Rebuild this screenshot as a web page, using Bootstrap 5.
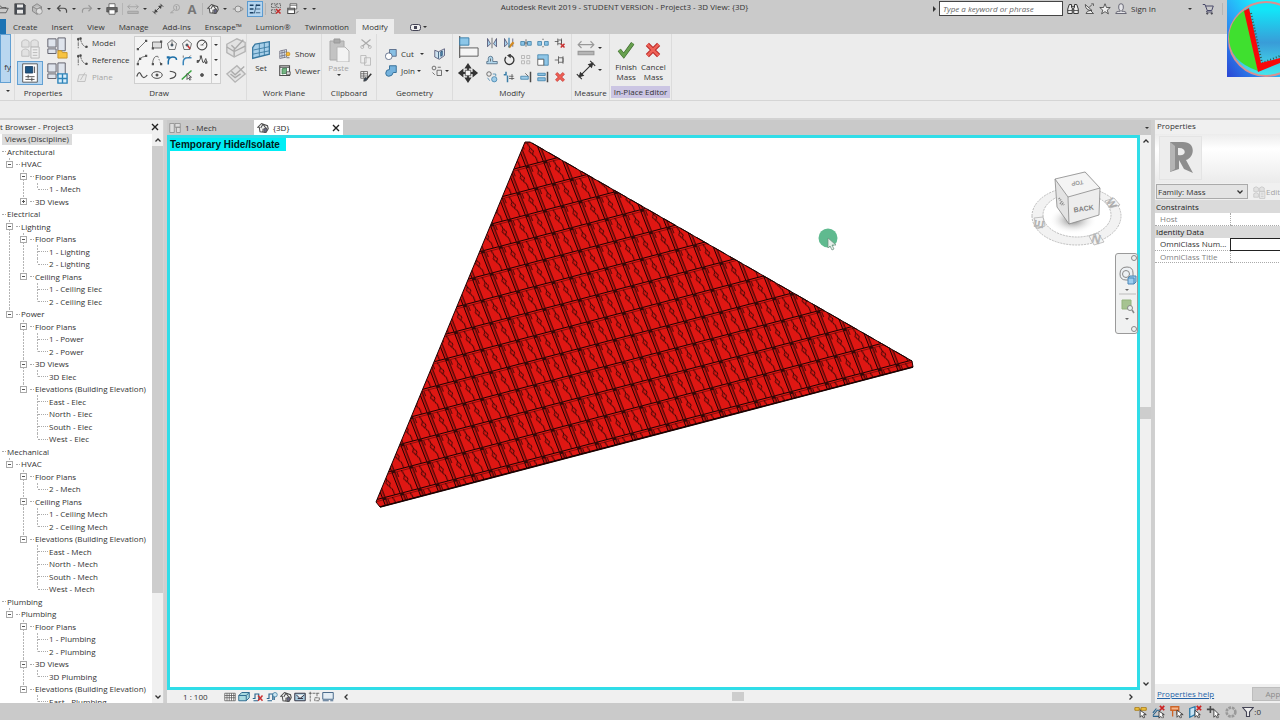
<!DOCTYPE html>
<html lang="en">
<head>
    <meta charset="UTF-8">
    <meta name="viewport" content="width=device-width, initial-scale=1">
    <title>Autodesk Revit 2019 - Project3</title>
    <link href="https://cdn.jsdelivr.net/npm/bootstrap@5.3.0/dist/css/bootstrap.min.css" rel="stylesheet">
    <style>
        body {
            font-family: "Open Sans", "Noto Sans", sans-serif;
            font-size: 8px;
            line-height: 12px;
            color: #333;
            background-color: #ececec;
        }

        button, input, select {
            font: inherit;
            color: inherit;
        }

        button {
            border: 0;
            background: none;
            padding: 0;
        }

        svg {
            display: block;
            flex: none;
        }

        use {
            fill: none;
            stroke: #4b4b4b;
        }

        .ic { width: 14px; height: 14px; }
        .ic-xs { width: 12px; height: 12px; }
        .ic-lg { width: 24px; height: 24px; }
        .caret { width: 8px; flex: none; }

        .caret::after, .arrow-mark {
            content: "";
            display: block;
            width: 4px;
            margin: auto;
            border: 2px solid transparent;
            border-top-color: #333;
            border-bottom: 0;
        }

        /* title bar */
        .titlebar, .tabbar, .statusbar { background-color: #cacaca; }
        .titlebar { height: 19px; }
        .quick { margin-left: -5px; gap: 1px; height: 17px; }
        .quick .tool { width: 16px; }
        .quick .tool svg { margin: auto; }
        .quick .active { background: #b5d5ef; box-shadow: inset 0 0 0 1px #5c9bd0; height: 16px; }
        .text-tool { font-size: 13px; font-weight: 700; color: #777; }
        .vsep { width: 1px; height: 12px; background: #b5b5b5; margin: 0 1px; }
        .app-title { line-height: 14px; }
        .account { width: 349px; height: 17px; }
        .search-box { width: 124px; height: 15px; border: 1px solid #444; background: #fff; padding: 0 3px; font-style: italic; }
        .search-box::placeholder { color: #666; opacity: 1; }
        .account-caret { margin: 0 8px 0 30px; }
        .logo-tile { top: 0; right: 0; z-index: 5; }

        /* ribbon */
        .tabbar { height: 15px; }
        .tabbar .file-tab { width: 6px; background: #1c73b4; }
        .tabbar .tab { padding: 0 7px; line-height: 15px; }
        .tabbar .tab.active { background: #ececec; padding: 0 6px; }
        .ribbon { height: 67px; border-bottom: 1px solid #d5d5d5; }
        .panel { border-right: 1px solid #dcdcdc; flex: none; }
        .panel-body { height: 52px; }
        .panel-name { text-align: center; line-height: 13px; }
        .selected { background: #b9d7f0; box-shadow: inset 0 0 0 1px #62a0d3; }
        .stack { display: flex; flex-direction: column; gap: 5px; }
        .w-select { width: 15px; }
        .w-props { width: 57px; }
        .w-draw { width: 175px; }
        .w-plane { width: 75px; }
        .w-clip { width: 55px; }
        .w-geom { width: 76px; }
        .w-mod { width: 119px; }
        .w-meas { width: 38px; }
        .w-place { width: 62px; }
        .dim { color: #a5a5a5; }
        .modify-btn { width: 11px; height: 49px; }
        .prop-grid { display: grid; grid-template-columns: repeat(2, 26px); grid-auto-rows: 24px; place-content: center; gap: 1px; }
        .prop-grid button { display: flex; align-items: center; justify-content: center; }
        .draw-list { width: 54px; }
        .gallery { width: 87px; height: 48px; border: 1px solid #cfcfcf; background: #f4f4f4; }
        .gallery-grid { display: grid; grid-template-columns: repeat(5, 15px); place-items: center; flex: 1; }
        .gallery-scroll { width: 9px; border-left: 1px solid #cfcfcf; }
        .mod-grid { display: grid; grid-template-columns: repeat(5, 17px); grid-template-rows: repeat(3, 17px); place-items: center; }
        .two-line { line-height: 10px; }
        .place-name { background: #cbc5e3; margin: 0 1px 1px; line-height: 12px; }
        .optionbar { height: 19px; border-bottom: 2px solid #d2d2d2; }

        /* project browser */
        .browser { width: 164px; background: #fff; border-right: 1px solid #d5d5d5; }
        .dock-head { height: 14px; background: #f0f0f0; flex: none; }
        .tree { margin-top: -1px; padding-left: 2px; min-height: 0; }
        .tree-row { height: 12px; display: flex; align-items: center; flex: none; white-space: nowrap; }
        .tree-row:nth-child(even) { height: 13px; }
        .guide { width: 14px; align-self: stretch; flex: none; display: flex; align-items: center; justify-content: center; }
        .line-full, .line-half { background: repeating-linear-gradient(#b5b5b5 0 2px, transparent 2px 3px) 7px 0 / 1px 100% no-repeat; }
        .line-half { background-size: 1px 50%; }
        .stub { width: 4px; border-top: 1px dotted #aaa; margin-right: 1px; flex: none; }
        .stub-leaf { width: 10px; margin-left: -6px; }
        .node-box { width: 7px; height: 7px; border: 1px solid #aaa; background: #fff; display: flex; align-items: center; justify-content: center; position: relative; }
        .node-box::before { content: ""; width: 3px; height: 1px; background: #555; }
        .node-plus::after { content: ""; position: absolute; width: 1px; height: 3px; background: #555; }
        .tree-root { background: #dcdcdc; padding: 0 3px; }
        .scroll-v { width: 11px; background: #f0f0f0; flex: none; }
        .scroll-v .end { height: 12px; display: flex; align-items: center; justify-content: center; }
        .thumb { background: #cdcdcd; }
        .browser .thumb { flex: 446; }
        .browser .track { flex: 98; }

        /* drawing area */
        .gutter { width: 3px; background: #cfcfcf; }
        .viewtabs { height: 15px; background: #c9c9c9; }
        .viewtab { width: 87px; gap: 4px; padding: 0 2px; }
        .viewtab.active { background: #fff; width: 89px; color: #222; padding: 0 3px; }
        .viewport { border: 3px solid #30dde8; background: #fff; min-height: 0; }
        .mode-flag { background: #00eef5; color: #001b20; font: bold 10px/13px "Liberation Sans", sans-serif; height: 13px; width: 116px; top: 0; left: 0; white-space: nowrap; z-index: 2; }
        .cube { top: 29px; right: 13px; }
        .navbar-3d { top: 115px; right: -1px; width: 23px; height: 81px; border: 1px solid #9a9a9a; border-radius: 3px; background: rgba(236, 238, 238, .8); }
        .viewbar { height: 13px; background: #f0f0f0; }
        .gap-tools { gap: 2px; }
        .h-thumb { width: 12px; height: 9px; }

        /* properties */
        .props { width: 126px; border-left: 1px solid #d0d0d0; background: #fff; }
        .props .dock-head { padding-left: 2px; }
        .type-box { height: 49px; background: linear-gradient(#ececec, #fff 30%, #ebebeb); padding: 2px 4px; }
        .type-img { width: 43px; height: 44px; background: #ededed; border: 1px solid #e4e4e4; }
        .type-row { height: 17px; background: #f0f0f0; padding-left: 1px; }
        .type-select { width: 92px; height: 15px; border: 1px solid #aaa; background: #e3e3e3; appearance: none; padding: 0 1px; }
        .grid-table { width: 160px; table-layout: fixed; border-collapse: collapse; }
        .grid-table th, .grid-table td { height: 12px; padding: 0 0 0 5px; line-height: 11px; font-weight: 400; border-bottom: 1px dotted #aaa; white-space: nowrap; overflow: hidden; }
        .grid-table .name-col { width: 75px; }
        .grid-table .dim { color: #828282; }
        .grid-table .group th { background: #dadada; padding-left: 1px; border-bottom: 0; color: #222; height: 13px; }
        .grid-table td { border-left: 1px dotted #aaa; padding: 0; }
        .grid-table input { display: block; width: 100%; height: 11px; border: 0; padding: 0; background: #fff; }
        .grid-table .current { border: 1px solid #222; }
        .props-foot { height: 19px; background: #f0f0f0; }
        .props-foot a { color: #2664a8; width: 97px; padding-left: 2px; }
        .apply { width: 48px; height: 14px; background: #cdcdcd; border: 1px solid #bdbdbd; color: #8b8b8b; flex: none; }
        .statusbar { height: 17px; }
        .status-tools { gap: 4px; padding-right: 19px; }
    </style>
</head>
<body class="vh-100 d-flex flex-column overflow-hidden position-relative">

    <!-- icon sprite -->
    <svg width="0" height="0" class="position-absolute">
        <symbol id="open" viewBox="0 0 16 16"><path d="M1 13V4h4l1 2h6v2M1 13l3-6h11l-3 6z"/></symbol>
        <symbol id="save" viewBox="0 0 16 16"><path d="M1 1h12l2 2v12H1z" fill="#454a52"/><path d="M4 2h8v4H4zM4 9h8v5H4z" fill="#e8e8e8" stroke="none"/></symbol>
        <symbol id="sync" viewBox="0 0 16 16"><path d="M2 5l6-4 6 4v6l-6 4-6-4zM2 5l6 3 6-3M8 8v7" stroke="#777" fill="#bbb"/><circle cx="11" cy="11" r="4" fill="#ddd" stroke="#888"/></symbol>
        <symbol id="undo" viewBox="0 0 16 16"><path d="M6 3L2 7l4 4M2 7h8q5 0 4 6" stroke-width="1.6"/></symbol>
        <symbol id="redo" viewBox="0 0 16 16"><path d="M10 3l4 4-4 4M14 7H6q-5 0-4 6" stroke="#999" stroke-width="1.6"/></symbol>
        <symbol id="print" viewBox="0 0 16 16"><path d="M4 6V1h8v5" fill="#fff"/><path d="M1 6h14v6H1z" fill="#666"/><path d="M4 9h8v6H4z" fill="#fff"/></symbol>
        <symbol id="meas" viewBox="0 0 16 16"><path d="M1 5h14M4 2L1 5l3 3M12 2l3 3-3 3" stroke="#999"/><path d="M1 11h14v3H1z" fill="#b5b5b5" stroke="#999"/></symbol>
        <symbol id="dim" viewBox="0 0 16 16"><path d="M3 13L13 3M1 11l4 4M11 1l4 4" stroke-width="1.3"/><path d="M3 13l1-5 4 4zM13 3l-1 5-4-4z" fill="#444" stroke="none"/></symbol>
        <symbol id="tag" viewBox="0 0 16 16"><circle cx="10" cy="6" r="4" stroke="#999"/><path d="M9 5l1-1v5M7 9l-5 4h4" stroke="#999"/></symbol>
        <symbol id="house" viewBox="0 0 16 16"><path d="M1 7l5-5 8 3 1 4-3 5-8-1-1-6zM5 8l3-5 5 7M8 9v5" fill="#f3f3f3" stroke-width="1.4"/><path d="M9 9l4-1v4l-3 2z" fill="#668"/></symbol>
        <symbol id="section" viewBox="0 0 16 16"><path d="M1 8h4M12 5l3 3-3 3" stroke="#777"/><circle cx="8" cy="8" r="4" stroke="#777" fill="#ddd"/></symbol>
        <symbol id="thin" viewBox="0 0 16 16"><path d="M1 3h5M1 8h5M1 13h5M9 3h6" stroke="#1c4164" stroke-width="2"/><path d="M9 8h6M9 13h6" stroke="#1c4164"/><path d="M7 14L10 2" stroke="#1c4164"/></symbol>
        <symbol id="closeh" viewBox="0 0 16 16"><path d="M2 1h5v5H2zM9 1h5v5H9zM2 9h5v5H2z" stroke-dasharray="2 1"/><path d="M8 8l6 6m0-6l-6 6" stroke="#c12c2c" stroke-width="2"/></symbol>
        <symbol id="switch" viewBox="0 0 16 16"><path d="M4 1h9v7H4zM4 3h9" fill="#fff"/><path d="M1 7h9v7H1zM1 9h9" fill="#fff" stroke-width="1.4"/><path d="M12 14l3-3"/></symbol>
        <symbol id="binoc" viewBox="0 0 16 16"><path d="M3 2h3v4l1 1v7H1V8zM10 2h3l2 6v6H9V7l1-1zM6 5h4M7 8h2" fill="#eee" stroke="#333" stroke-width="1.3"/><path d="M1 10h6M9 10h6" stroke="#333"/></symbol>
        <symbol id="dish" viewBox="0 0 16 16"><path d="M3 2q0 8 9 8zM8 6l4-4M4 14h10l-4-4-4 1z" fill="#eee" stroke="#333"/><path d="M11 1h3v3"/></symbol>
        <symbol id="star" viewBox="0 0 16 16"><path d="M8 1l2 5h5l-4 3.500 1.500 5L8 11.500 3.500 14.500 5 9.500 1 6h5z" fill="#eee" stroke="#333"/></symbol>
        <symbol id="person" viewBox="0 0 16 16"><path d="M5 4q0-3 3-3t3 3v3q0 2-2 3v1q6 0 6 3H1q0-3 6-3v-1Q5 9 5 7z" fill="#e5e5e8" stroke="#445"/></symbol>
        <symbol id="cart" viewBox="0 0 16 16"><path d="M1 2h3l3 8h6l2-6H5M7 10l-1 2h8" stroke="#446" stroke-width="1.3"/><circle cx="7" cy="14" r="1" fill="#446"/><circle cx="13" cy="14" r="1" fill="#446"/></symbol>
        <symbol id="tile4" viewBox="0 0 24 24"><path d="M3 5q4-4 8 0v6H3zM13 5q4-4 8 0v6h-8zM3 15q4-4 8 0v6H3z" fill="#e2e2e2" stroke="#bbb"/><path d="M13 11h9v12h-9zM15 14h5M15 17h5M15 20h5" fill="#eee" stroke="#b5b5b5"/></symbol>
        <symbol id="propsheet" viewBox="0 0 24 24"><path d="M4 2h16v20H4z" fill="#fff" stroke="#555"/><path d="M7 5h8v7H7z" fill="#1c5583" stroke="#1c4164"/><path d="M17 5v7M7 16h10M7 19h10M10 14v4M14 17v4"/></symbol>
        <symbol id="famtype" viewBox="0 0 24 24"><path d="M2 2h9v9H2zM13 1h8v14h-8zM2 13h9v5H2z" fill="#dfe4ec" stroke="#5b5b66"/><path d="M13 15h4l1 2h5v6H13z" fill="#f7c342" stroke="#c69224"/></symbol>
        <symbol id="famcat" viewBox="0 0 24 24"><path d="M2 2h9v9H2zM13 1h8v14h-8zM2 13h9v5H2z" fill="#dfe4ec" stroke="#5b5b66"/><path d="M13 13h10v10H13zM18 13v10M13 18h10" fill="#d9eefb" stroke="#2d83b8" stroke-width="1.500"/></symbol>
        <symbol id="model" viewBox="0 0 16 16"><path d="M3 1v14M6 2q1 9 8 12" stroke-dasharray="5 1"/><path d="M2 2h2v2H2zM13 12h2v2h-2zM5 1h2v2H5z" fill="#444"/></symbol>
        <symbol id="plane" viewBox="0 0 16 16"><path d="M2 14l2-9h10l-2 9zM6 12l6-10" stroke="#b5b5b5" fill="#e8e8e8"/></symbol>
        <symbol id="g1" viewBox="0 0 16 16"><path d="M3 13L13 3" /><path d="M1 12h3v3H1zM12 1h3v3h-3z" fill="#555" stroke="none"/></symbol>
        <symbol id="g2" viewBox="0 0 16 16"><path d="M2 4h12v8H2z" fill="#ddd"/><path d="M1 11h3v3H1zM12 2h3v3h-3z" fill="#555" stroke="none"/></symbol>
        <symbol id="g3" viewBox="0 0 16 16"><path d="M8 1l6 5-2 8H4L2 6zM8 8V3"/><circle cx="8" cy="8" r="1.500" fill="#368"/></symbol>
        <symbol id="g4" viewBox="0 0 16 16"><path d="M8 1l6 5-2 8H4L2 6z"/><circle cx="8" cy="8" r="1.500" fill="#368"/><path d="M9 9l3 4" stroke="#c33" stroke-width="2"/></symbol>
        <symbol id="g5" viewBox="0 0 16 16"><circle cx="8" cy="8" r="6.500" stroke-width="1.500"/><path d="M8 8l4-4M6 8h4"/></symbol>
        <symbol id="g6" viewBox="0 0 16 16"><path d="M2 14Q3 4 13 3"/><path d="M1 12h3v3H1zM12 1h3v3h-3zM4 5h3v3H4z" fill="#555" stroke="none"/></symbol>
        <symbol id="g7" viewBox="0 0 16 16"><path d="M2 13Q3 2 9 3"/><path d="M9 3l4 10" stroke-dasharray="2 2"/><path d="M12 12h3v3h-3zM1 12h3v3H1z" fill="#555" stroke="none"/></symbol>
        <symbol id="g8" viewBox="0 0 16 16"><path d="M3 14Q2 4 9 4q5 0 5 4" stroke="#1d6fa8" stroke-width="2"/><path d="M1 3h4v3H1z" fill="#1d6fa8" stroke="none"/></symbol>
        <symbol id="g9" viewBox="0 0 16 16"><path d="M3 15v-4q0-6 6-6h5" stroke="#3b86bb" stroke-width="2"/><path d="M3 2v3M13 2l-3 3"/></symbol>
        <symbol id="g10" viewBox="0 0 16 16"><path d="M1 11q2 2 4-3l2-5 2 8q2 2 3-3l1-2q1 4 2 5" stroke-width="1.300"/><path d="M5 2h3v3H5zM12 10h3v3h-3zM1 8h3v3H1z" fill="#555" stroke="none"/></symbol>
        <symbol id="g11" viewBox="0 0 16 16"><path d="M1 10q3-9 6-2t8 0" stroke-width="1.600"/></symbol>
        <symbol id="g12" viewBox="0 0 16 16"><ellipse cx="8" cy="8" rx="7" ry="4.500" stroke-width="1.300"/><circle cx="8" cy="8" r="1.500" fill="#444"/></symbol>
        <symbol id="g13" viewBox="0 0 16 16"><path d="M5 3q9 1 8 5t-8 5" stroke-width="1.500"/></symbol>
        <symbol id="g14" viewBox="0 0 16 16"><path d="M1 14L14 2" stroke="#37a13c" stroke-width="2"/><path d="M8 6v8l2-2 2 3 1-1-2-3h3z" fill="#eee" stroke="#333"/></symbol>
        <symbol id="g15" viewBox="0 0 16 16"><circle cx="8" cy="8" r="2" fill="#555"/></symbol>
        <symbol id="face" viewBox="0 0 24 24"><path d="M2 9l11-6 9 4v10l-12 6-8-5z" fill="#e2e2e2" stroke="#b4b4b4" stroke-width="1.500"/><path d="M7 10l4 4 9-10M10 14v8M2 12l8 5 12-6" stroke="#aaa" stroke-width="1.500"/></symbol>
        <symbol id="faceline" viewBox="0 0 24 24"><path d="M2 13L13 4l9 9-11 9z" fill="#e4e4e4" stroke="#b4b4b4" stroke-width="1.500"/><path d="M7 10l4 4 10-9M6 13l5 4 6-4" stroke="#aaa" stroke-width="1.500"/></symbol>
        <symbol id="setplane" viewBox="0 0 24 24"><path d="M5 5l17-3v15L2 22V9z" fill="#a7cfe9" stroke="#36779f" stroke-width="1.500"/><path d="M10 4v16M16 3v16M3 12l19-4M2 17l20-4" stroke="#36779f"/></symbol>
        <symbol id="showp" viewBox="0 0 16 16"><path d="M1 4l9-2v10l-9 2zM4 3v10M7 3v10M1 7l9-2M1 11l9-2" fill="#e5eef4" stroke="#667"/><circle cx="12" cy="8" r="2.500" fill="#f7bd35" stroke="#c78b1d"/><path d="M10 13h4"/></symbol>
        <symbol id="viewer" viewBox="0 0 16 16"><path d="M1 1h13v13H1zM1 3h13" fill="#fff" stroke-width="1.500"/><path d="M4 5l6-1v7l-6 1z" fill="#74b583" stroke="#377a49"/><path d="M10 9h5v4h-5z" fill="#ddd"/></symbol>
        <symbol id="paste" viewBox="0 0 24 24"><path d="M3 3h14v19H3z" fill="#c3c3c3" stroke="#aaa"/><path d="M7 1h6v4H7z" fill="#aaa" stroke="#999"/><path d="M10 9h8l4 4v11H10z" fill="#f3f3f3" stroke="#b5b5b5"/></symbol>
        <symbol id="scissors" viewBox="0 0 16 16"><path d="M2 2l11 9M14 2L3 11" stroke="#aaa" stroke-width="1.500"/><circle cx="3" cy="12" r="2" stroke="#aaa"/><circle cx="13" cy="12" r="2" stroke="#aaa"/></symbol>
        <symbol id="copy" viewBox="0 0 16 16"><path d="M1 2h7v10H1zM6 5h8v10H6z" fill="#eee" stroke="#b0b0b0"/></symbol>
        <symbol id="match" viewBox="0 0 16 16"><path d="M1 2h9v9H1zM1 5h9M1 8h9M5 2v9" fill="#eee" stroke="#555"/><path d="M15 5l-6 7" stroke="#333" stroke-width="2"/><path d="M8 10q-3 0-3 5 4 0 5-3z" fill="#345"/></symbol>
        <symbol id="cutg" viewBox="0 0 16 16"><path d="M6 2h9v9H6z" fill="#87bfe4" stroke="#457"/><circle cx="5" cy="11" r="4.500" fill="#fff" stroke="#457"/></symbol>
        <symbol id="joing" viewBox="0 0 16 16"><path d="M6 1h9v9h-4q-1 5-6 5-4 0-4-4 0-5 5-5z" fill="#74b2dd" stroke="#357099" stroke-width="1.300"/></symbol>
        <symbol id="wallj" viewBox="0 0 16 16"><path d="M1 3l5 2 8-4v9l-7 5-6-3z" fill="#cfe3f0" stroke="#446"/><path d="M6 5v9M9 5l2-1v6l-2 1z" stroke="#246" fill="#5b9ac8"/></symbol>
        <symbol id="demol" viewBox="0 0 16 16"><circle cx="4" cy="4" r="2.500"/><path d="M8 7h6v7H8zM2 10l3 3M9 3h4"/></symbol>
        <symbol id="align" viewBox="0 0 24 24"><path d="M3 0v24" stroke="#333"/><path d="M3 2h10v8H3z" fill="#8cc6e8" stroke="#377da8"/><path d="M3 13h20v9H3z" fill="#f5f5f5" stroke="#555"/></symbol>
        <symbol id="move" viewBox="0 0 24 24"><path d="M12 1l4 6h-3v4h4V7l6 5-6 5v-4h-4v4h3l-4 6-4-6h3v-4H7v4l-6-5 6-5v4h4V7H8z" fill="#333" stroke="none"/><path d="M9 9h6v6H9z" fill="#f4f4f4" stroke="#555"/></symbol>
        <symbol id="m1" viewBox="0 0 16 16"><path d="M2 2v11l4-4zM14 2v11l-4-4z" fill="#a8d1ea" stroke="#446"/><path d="M8 1v14"/></symbol>
        <symbol id="m2" viewBox="0 0 16 16"><path d="M2 2v11l4-4zM13 2v11" fill="#a8d1ea" stroke="#446"/><path d="M8 14l6-7" stroke="#d28a22" stroke-width="3"/><path d="M8 1v13" stroke="#2678ad" stroke-width="1.500"/></symbol>
        <symbol id="m3" viewBox="0 0 16 16"><path d="M1 6h5v5H1zM10 6h5v5h-5z" fill="#8ac3e6" stroke="#387ba4"/><path d="M8 3v10M6 8h4"/></symbol>
        <symbol id="m4" viewBox="0 0 16 16"><path d="M1 6h5v5H1zM10 6h5v5h-5z" fill="#8ac3e6" stroke="#387ba4"/><path d="M7 3h2M7 13h2"/></symbol>
        <symbol id="m5" viewBox="0 0 16 16"><path d="M1 6h5M5 2v9M5 4h5v5H5M10 2v9"/><path d="M9 9l5 5m0-5l-5 5" stroke="#c93030" stroke-width="2"/></symbol>
        <symbol id="m6" viewBox="0 0 16 16"><path d="M1 13h14v-3H9V6q0-3-3-3T3 6v4H1z" fill="#b3d8ed" stroke="#46627a"/><path d="M6 10V6"/></symbol>
        <symbol id="m7" viewBox="0 0 16 16"><path d="M4 4a6 6 0 1 0 5-2" stroke="#333" stroke-width="1.700"/><path d="M10 0v5L6 2z" fill="#333"/></symbol>
        <symbol id="m8" viewBox="0 0 16 16"><path d="M2 2h4v4H2zM9 2h4v4H9zM2 9h4v4H2zM9 9h4v4H9z" stroke="#aaa"/></symbol>
        <symbol id="m9" viewBox="0 0 16 16"><path d="M1 1h14v14H9V7H1z" fill="#8fc6e7" stroke="#397da8"/><path d="M1 7h8v8H1z" fill="#fff"/></symbol>
        <symbol id="m10" viewBox="0 0 16 16"><path d="M1 8h5M6 3v10M6 5h6v6H6M12 3v10"/></symbol>
        <symbol id="m11" viewBox="0 0 16 16"><circle cx="4" cy="4" r="3"/><path d="M9 4h4v3M2 9l3 4" stroke="#397da8"/><circle cx="11" cy="11" r="3.500" fill="#9fcce8" stroke="#397da8"/></symbol>
        <symbol id="m12" viewBox="0 0 16 16"><path d="M4 1v4H1M6 6v9" stroke="#397da8" stroke-width="2"/><path d="M8 7h6M12 4v8M8 10h7"/></symbol>
        <symbol id="m13" viewBox="0 0 16 16"><path d="M14 1v14" stroke-width="2"/><path d="M1 7h10v4H1z" fill="#9fcce8" stroke="#397da8"/><path d="M7 3l4 4"/></symbol>
        <symbol id="m14" viewBox="0 0 16 16"><path d="M14 1v14" stroke-width="2"/><path d="M1 3h10v3H1zM1 9h10v4H1z" fill="#8bc1e2" stroke="#397da8"/></symbol>
        <symbol id="redx" viewBox="0 0 16 16"><path d="M3 3l10 10M13 3L3 13" stroke="#b92525" stroke-width="4"/><path d="M3 3l10 10M13 3L3 13" stroke="#ee6257" stroke-width="2.500"/></symbol>
        <symbol id="check" viewBox="0 0 16 16"><path d="M2 8l4 5 8-11" stroke="#37642a" stroke-width="3.500"/><path d="M2 8l4 5 8-11" stroke="#68a04f" stroke-width="2.500"/></symbol>
        <symbol id="bigdim" viewBox="0 0 24 24"><path d="M4 20L20 4M1 17l6 6M17 1l6 6" stroke="#333" stroke-width="1.400"/><path d="M3 21l2-7 5 5zM21 3l-2 7-5-5z" fill="#333" stroke="none"/></symbol>
        <symbol id="up" viewBox="0 0 8 8"><path d="M1.500 5.500L4 3l2.500 2.500" stroke="#333" stroke-width="1.300"/></symbol>
        <symbol id="down" viewBox="0 0 8 8"><path d="M1.500 2.500L4 5l2.500-2.500" stroke="#333" stroke-width="1.300"/></symbol>
        <symbol id="left" viewBox="0 0 8 8"><path d="M5.500 1.500L3 4l2.500 2.500" stroke="#333" stroke-width="1.300"/></symbol>
        <symbol id="right" viewBox="0 0 8 8"><path d="M2.500 1.500L5 4 2.500 6.500" stroke="#333" stroke-width="1.300"/></symbol>
        <symbol id="cross" viewBox="0 0 8 8"><path d="M1 1l6 6M7 1L1 7" stroke="#222" stroke-width="1.400"/></symbol>
        <symbol id="planview" viewBox="0 0 16 16"><path d="M1 2h6v12H1zM8 2h7v5H8zM10 7v7h5V7z" stroke="#888" fill="#ddd"/></symbol>
        <symbol id="detail" viewBox="0 0 16 16"><path d="M1 3h14v10H1zM1 6h14M1 9h14M4 3v10M7 3v10M10 3v10M13 3v10" fill="#fff" stroke="#555"/></symbol>
        <symbol id="style3d" viewBox="0 0 16 16"><path d="M1 6l4-4h10v7l-4 4H1zM1 6h10v7M11 6l4-4" fill="#a9dbe0" stroke="#2d6c90" stroke-width="1.300"/></symbol>
        <symbol id="sunx" viewBox="0 0 16 16"><path d="M1 10h3V4h5v8M2 13h6" stroke="#27638d" stroke-width="1.500"/><path d="M8 6l6 7m0-7l-6 7" stroke="#c33" stroke-width="2"/></symbol>
        <symbol id="sunb" viewBox="0 0 16 16"><path d="M1 10h3V4h5v8M2 13h6M11 12V5" stroke="#27638d" stroke-width="1.500"/><circle cx="12" cy="5" r="3" fill="#cde7f2" stroke="#38789f"/></symbol>
        <symbol id="shade" viewBox="0 0 16 16"><path d="M1 3h14v10H1zM3 5l5 5 6-5M5 10h7" fill="#a8cbdf" stroke="#334" stroke-width="1.300"/></symbol>
        <symbol id="crop" viewBox="0 0 16 16"><path d="M1 3h14M3 1v13M12 3v5M9 9h6v4H9z" stroke-dasharray="4 1"/></symbol>
        <symbol id="screen" viewBox="0 0 16 16"><path d="M1 2h14v9H1zM1 13h8M11 13h4" fill="#e4edf4" stroke="#47688a" stroke-width="1.300"/></symbol>
        <symbol id="s1" viewBox="0 0 16 16"><path d="M1 3h5v3H1zM8 3h6v3H8zM6 5h2" fill="#f4c743" stroke="#a8790f"/><path d="M7 6v8l2-2 2 3 1-1-1-3h3z" fill="#fff" stroke="#333"/></symbol>
        <symbol id="s2" viewBox="0 0 16 16"><path d="M1 12l5-6h4M1 9l4-5M1 13h7" stroke="#27638d" stroke-width="1.300"/><path d="M9 1l5 5m0-5L9 6" stroke="#c22" stroke-width="2"/><path d="M8 7v8l2-2 2 2 1-1-1-3h2z" fill="#fff" stroke="#333"/></symbol>
        <symbol id="s3" viewBox="0 0 16 16"><path d="M1 2h9v4H1zM3 6v7M8 6v5" fill="#f6b68a" stroke="#cd6528" stroke-width="1.500"/><path d="M8 6v8l2-2 2 3 1-1-1-3h3z" fill="#fff" stroke="#333"/></symbol>
        <symbol id="s4" viewBox="0 0 16 16"><path d="M2 4l6-2v9l-6 3z" fill="#cae5f4" stroke="#2979aa" stroke-width="1.500"/><path d="M10 1l5 5m0-5l-5 5" stroke="#c22" stroke-width="2"/><path d="M8 6v8l2-2 2 3 1-1-1-3h2z" fill="#fff" stroke="#333"/></symbol>
        <symbol id="s5" viewBox="0 0 16 16"><path d="M5 1v8M1 5h8" stroke-width="1.800"/><path d="M9 5v9l2-2 2 3 1-1-1-3h2z" fill="#fff" stroke="#333"/></symbol>
        <symbol id="s6" viewBox="0 0 16 16"><circle cx="8" cy="8" r="5" stroke="#999" stroke-width="3" stroke-dasharray="3 1"/></symbol>
        <symbol id="s7" viewBox="0 0 16 16"><path d="M1 2h14l-5 6v6H6V8z" fill="#eee" stroke="#445" stroke-width="1.500"/></symbol>
    </svg>

    <!-- title bar -->
    <header class="titlebar d-flex flex-shrink-0">
        <div class="quick d-flex align-items-center" id="quick"></div>
        <div class="app-title flex-grow-1 text-center text-nowrap">Autodesk Revit 2019 - STUDENT VERSION - Project3 - 3D View: {3D}</div>
        <div class="account d-flex align-items-center flex-shrink-0">
            <svg width="8" height="8" viewBox="0 0 8 8"><path d="M2 1l3 3-3 3z" fill="#333"/></svg>
            <input class="search-box" type="text" placeholder="Type a keyword or phrase" aria-label="Search help">
            <button class="ps-1 pe-1" aria-label="Search"><svg class="ic-xs"><use href="#binoc"/></svg></button>
            <button aria-label="Communication center"><svg class="ic-xs"><use href="#dish"/></svg></button>
            <button class="ps-1 pe-1" aria-label="Favourites"><svg class="ic-xs"><use href="#star"/></svg></button>
            <button class="d-flex align-items-center gap-1"><svg class="ic-xs"><use href="#person"/></svg>Sign In</button>
            <button class="caret account-caret" aria-label="Account menu"></button>
            <button class="me-1" aria-label="App store"><svg class="ic-xs"><use href="#cart"/></svg></button>
            <span class="vsep ms-1"></span>
        </div>
    </header>

    <svg class="logo-tile position-absolute" width="53" height="77" viewBox="1227 0 53 77">
        <defs>
            <linearGradient id="sky" x1="1" y1="0" x2="0" y2="1"><stop offset=".2" stop-color="#19f3ff"/><stop offset=".6" stop-color="#2c9cf5"/><stop offset="1" stop-color="#2a45d4"/></linearGradient>
            <linearGradient id="glass" x1="0" y1="0" x2="0" y2="1"><stop offset=".1" stop-color="#12e6f8"/><stop offset=".55" stop-color="#399cd8"/><stop offset="1" stop-color="#45e8ee"/></linearGradient>
        </defs>
        <path d="M1227 0h53v77h-53z" fill="url(#sky)"/>
        <circle cx="1266" cy="39" r="37" fill="url(#glass)" stroke="#d99090" stroke-width="2"/>
        <path d="M1245 10l13 61Q1229 61 1229 37q1-17 16-27z" fill="#3fe02f"/>
        <path d="M1251 13l11 50 18-7" fill="none" stroke="#2b5b50" stroke-width="2" stroke-dasharray="1 2"/>
        <path d="M1244 11l5-3 12 55 19-5v5l-22 9z" fill="#f80808"/>
    </svg>

    <nav class="tabbar d-flex flex-shrink-0" id="tabs"></nav>

    <!-- ribbon -->
    <section class="ribbon d-flex flex-shrink-0">
        <div class="panel w-select">
            <div class="panel-body"><button class="selected modify-btn pt-3 text-end overflow-hidden" aria-label="Modify">fy</button></div>
            <div class="caret mx-1 pt-1"></div>
        </div>
        <div class="panel w-props">
            <div class="panel-body prop-grid">
                <button aria-label="Type properties"><svg width="22" height="22"><use href="#tile4"/></svg></button>
                <button aria-label="Family types"><svg width="22" height="22"><use href="#famtype"/></svg></button>
                <button class="selected" aria-label="Properties"><svg width="22" height="22"><use href="#propsheet"/></svg></button>
                <button aria-label="Family category"><svg width="22" height="22"><use href="#famcat"/></svg></button>
            </div>
            <div class="panel-name">Properties</div>
        </div>
        <div class="panel w-draw">
            <div class="panel-body d-flex align-items-center px-1 gap-1">
                <div class="draw-list stack">
                    <button class="d-flex align-items-center gap-1 text-nowrap"><svg class="ic-xs"><use href="#model"/></svg>Model</button>
                    <button class="d-flex align-items-center gap-1 text-nowrap"><svg class="ic-xs"><use href="#model"/></svg>Reference</button>
                    <button class="d-flex align-items-center gap-1 dim"><svg class="ic-xs"><use href="#plane"/></svg>Plane</button>
                </div>
                <div class="gallery d-flex flex-shrink-0">
                    <div class="gallery-grid" id="gallery"></div>
                    <div class="gallery-scroll d-flex flex-column justify-content-around">
                        <span class="arrow-mark"></span><span class="arrow-mark"></span><span class="arrow-mark"></span>
                    </div>
                </div>
                <div class="d-flex flex-column gap-1">
                    <button aria-label="Draw on face"><svg width="22" height="22"><use href="#face"/></svg></button>
                    <button aria-label="Draw on work plane"><svg width="22" height="22"><use href="#faceline"/></svg></button>
                </div>
            </div>
            <div class="panel-name">Draw</div>
        </div>
        <div class="panel w-plane">
            <div class="panel-body d-flex px-1 gap-2">
                <button class="d-flex flex-column align-items-center pt-1"><svg width="20" height="24"><use href="#setplane"/></svg>Set</button>
                <div class="stack justify-content-center pt-1">
                    <button class="d-flex align-items-center gap-1"><svg class="ic-xs"><use href="#showp"/></svg>Show</button>
                    <button class="d-flex align-items-center gap-1"><svg class="ic-xs"><use href="#viewer"/></svg>Viewer</button>
                </div>
            </div>
            <div class="panel-name">Work Plane</div>
        </div>
        <div class="panel w-clip">
            <div class="panel-body d-flex justify-content-around pt-1">
                <button class="dim d-flex flex-column align-items-center"><svg class="ic-lg"><use href="#paste"/></svg>Paste<span class="caret mb-auto"></span></button>
                <div class="d-flex flex-column justify-content-between pb-1">
                    <button aria-label="Cut to clipboard"><svg class="ic-xs"><use href="#scissors"/></svg></button>
                    <button aria-label="Copy to clipboard"><svg class="ic-xs"><use href="#copy"/></svg></button>
                    <button aria-label="Match type"><svg class="ic-xs"><use href="#match"/></svg></button>
                </div>
            </div>
            <div class="panel-name">Clipboard</div>
        </div>
        <div class="panel w-geom">
            <div class="panel-body stack justify-content-center px-2 pt-1">
                <div class="d-flex align-items-center">
                    <button class="d-flex align-items-center gap-1"><svg class="ic-xs"><use href="#cutg"/></svg>Cut</button><span class="caret mx-1"></span>
                    <button class="ms-1" aria-label="Wall joins"><svg class="ic-xs"><use href="#wallj"/></svg></button>
                </div>
                <div class="d-flex align-items-center">
                    <button class="d-flex align-items-center gap-1"><svg class="ic-xs"><use href="#joing"/></svg>Join</button><span class="caret me-1"></span>
                    <button class="ms-1" aria-label="Demolish"><svg class="ic-xs"><use href="#demol"/></svg></button><span class="caret"></span>
                </div>
            </div>
            <div class="panel-name">Geometry</div>
        </div>
        <div class="panel w-mod">
            <div class="panel-body d-flex align-items-center px-1 gap-1">
                <div class="d-flex flex-column gap-1">
                    <button aria-label="Align"><svg width="22" height="22"><use href="#align"/></svg></button>
                    <button aria-label="Move"><svg width="22" height="22"><use href="#move"/></svg></button>
                </div>
                <div class="mod-grid" id="modGrid"></div>
            </div>
            <div class="panel-name">Modify</div>
        </div>
        <div class="panel w-meas">
            <div class="panel-body d-flex flex-column justify-content-around py-1">
                <div class="d-flex align-items-center px-1"><button aria-label="Measure"><svg width="20" height="18"><use href="#meas"/></svg></button><span class="caret"></span></div>
                <div class="d-flex align-items-center px-1"><button aria-label="Aligned dimension"><svg width="20" height="22"><use href="#bigdim"/></svg></button><span class="caret"></span></div>
            </div>
            <div class="panel-name">Measure</div>
        </div>
        <div class="panel w-place">
            <div class="panel-body d-flex justify-content-center gap-1 pt-1">
                <button class="d-flex flex-column align-items-center two-line"><svg width="18" height="24"><use href="#check"/></svg><span>Finish<br>Mass</span></button>
                <button class="d-flex flex-column align-items-center two-line"><svg width="18" height="24"><use href="#redx"/></svg><span>Cancel<br>Mass</span></button>
            </div>
            <div class="panel-name place-name">In-Place Editor</div>
        </div>
    </section>
    <div class="optionbar flex-shrink-0"></div>

    <main class="flex-grow-1 d-flex overflow-hidden">
        <!-- project browser -->
        <aside class="browser d-flex flex-column flex-shrink-0">
            <div class="dock-head d-flex align-items-center justify-content-between">
                <span>t Browser - Project3</span>
                <button class="me-1" aria-label="Close browser"><svg width="8" height="8"><use href="#cross"/></svg></button>
            </div>
            <div class="d-flex flex-grow-1 overflow-hidden">
                <div class="tree flex-grow-1 d-flex flex-column overflow-hidden" id="tree"></div>
                <div class="scroll-v d-flex flex-column">
                    <span class="end"><svg width="8" height="8"><use href="#up"/></svg></span>
                    <span class="thumb"></span><span class="track"></span>
                    <span class="end"><svg width="8" height="8"><use href="#down"/></svg></span>
                </div>
            </div>
        </aside>
        <div class="gutter"></div>

        <!-- drawing area -->
        <section class="flex-grow-1 d-flex flex-column">
            <div class="viewtabs d-flex flex-shrink-0">
                <button class="viewtab d-flex align-items-center"><svg class="ic-xs"><use href="#planview"/></svg>1 - Mech</button>
                <button class="viewtab active d-flex align-items-center"><svg class="ic-xs"><use href="#house"/></svg>{3D}<svg class="ms-auto" width="8" height="8"><use href="#cross"/></svg></button>
                <button class="caret ms-auto" aria-label="View list"></button>
            </div>
            <div class="d-flex flex-grow-1 overflow-hidden">
                <div class="viewport position-relative flex-grow-1">
                    <div class="mode-flag position-absolute">Temporary Hide/Isolate</div>
                    <svg width="100%" height="100%" viewBox="170 138 967 549">
                        <defs>
                            <!-- one roof tile, skewed onto the slope of the roof -->
                            <pattern id="roofTile" width="18" height="24" patternUnits="userSpaceOnUse" patternTransform="matrix(.983 -.256 .363 .929 542.700 161)">
                                <rect width="18" height="24" fill="#df1713"/>
                                <path d="M0 .5h18M.5 0v24M3 0v24" fill="none" stroke="#1c0202"/>
                                <path d="M0 2.500h18" fill="none" stroke="#6d0a08" stroke-width=".7"/>
                                <path d="M5 3v5M10 2l1 6-2 3 2 4 2-3-2-4M11 15l2 4v5" fill="none" stroke="#240303" stroke-width=".9"/>
                                <path d="M0 0h4v3H0z" fill="#340807"/>
                            </pattern>
                        </defs>
                        <path d="M525 142h5L912 361l1 6-533 140-4-5z" fill="url(#roofTile)" stroke="#1c0202" stroke-linejoin="round"/>
                        <path d="M532 143L912 361" stroke="#1c0202" stroke-dasharray="14 5"/>
                        <path d="M380 507l533-140" stroke="#1c0202" stroke-width="1.500"/>
                        <circle cx="828" cy="238" r="9.500" fill="#5fba8f"/>
                        <path d="M828 238v10l2-2 2 4 2-1-2-4h4z" fill="#e4efe9" stroke="#6b8e7c" stroke-width=".7"/>
                    </svg>
                    <svg class="cube position-absolute" width="94" height="80" viewBox="1030 167 94 80" font-family="Liberation Sans, sans-serif">
                        <defs><radialGradient id="cubeShade"><stop offset="0" stop-color="#777"/><stop offset="1" stop-color="#fff" stop-opacity="0"/></radialGradient></defs>
                        <path fill-rule="evenodd" d="M1032 216a44.500 29 0 1 0 89 0a44.500 29 0 1 0-89 0zM1043 215a34 22 0 1 0 68 0a34 22 0 1 0-68 0z" fill="#f2f2f2" stroke="#bbb" stroke-dasharray="2 1"/>
                        <ellipse cx="1073" cy="220" rx="24" ry="14" fill="url(#cubeShade)"/>
                        <path d="M1055 179l31-8 14 17-32 9z" fill="#f4f4f4"/><path d="M1055 179l13 18 1 27-12-17z" fill="#e3e3e3"/><path d="M1068 197l32-9-1 27-30 9z" fill="#ededed"/>
                        <path d="M1055 179l30-7 15 16-32 9zM1055 179l2 28 12 17-1-27M1100 188l-1 27-30 9" fill="none" stroke="#888" stroke-width=".8"/>
                        <text x="1084" y="211" font-size="7" font-weight="bold" fill="#808080" text-anchor="middle" transform="rotate(-8 1084 211)">BACK</text>
                        <text x="1077" y="181" font-size="6" font-weight="bold" fill="#999" text-anchor="middle" transform="rotate(170 1077 181)">TOP</text>
                        <g font-size="12" fill="#f4f4f4" stroke="#aaa" stroke-width=".7" text-anchor="middle">
                            <path d="M1034 218l9-1 2 9-8 3zM1089 236l9-3 6 9-10 3zM1105 201l9-3 6 7-10 3z"/>
                            <text x="1096" y="243" transform="rotate(15 1096 240)">N</text>
                            <text x="1039" y="228" transform="rotate(-80 1039 224)">E</text>
                            <text x="1112" y="207" font-size="10" transform="rotate(60 1112 203)">W</text>
                        </g>
                        <path d="M1059 198l5 7M1060 203l3 2" stroke="#888" stroke-width="2" stroke-dasharray="1 1"/>
                    </svg>
                    <div class="navbar-3d position-absolute">
                        <svg width="21" height="79" viewBox="0 0 21 79" fill="none" stroke="#888">
                            <circle cx="18" cy="4" r="2.500"/><circle cx="18" cy="75" r="2.500"/>
                            <path d="M4 20q0-7 7-7 6 0 6 6v7h-7q-6 0-6-6z" fill="#edf1f4"/><circle cx="10" cy="20" r="3.500"/>
                            <path d="M12 24l2-2h6v6l-2 2h-6zM12 24h6v6" fill="#9dcdf0" stroke="#4b87b6"/>
                            <path d="M9 35h4l-2 2zM9 64h4l-2 2z" fill="#666" stroke="none"/><path d="M3 40h17" stroke="#bbb"/>
                            <path d="M6 46h9v9H6z" fill="#a6c391" stroke="#94b37d"/><circle cx="14" cy="54" r="2.500" fill="#e9f1ee"/><path d="M16 56l2 3" stroke-width="1.500"/>
                        </svg>
                    </div>
                </div>
                <div class="scroll-v d-flex flex-column">
                    <span class="end"><svg width="8" height="8"><use href="#up"/></svg></span>
                    <span class="flex-grow-1 d-flex align-items-center"><span class="thumb w-100 pt-2 pb-1"></span></span>
                    <span class="end"><svg width="8" height="8"><use href="#down"/></svg></span>
                </div>
            </div>
            <div class="viewbar d-flex align-items-center flex-shrink-0 ps-3">
                <span class="me-3">1 : 100</span>
                <div class="d-flex gap-tools" id="viewTools"></div>
                <svg class="ms-2" width="8" height="8"><use href="#left"/></svg>
                <div class="flex-grow-1 d-flex justify-content-center"><span class="thumb h-thumb"></span></div>
                <svg class="me-3" width="8" height="8"><use href="#right"/></svg>
            </div>
        </section>
        <div class="gutter"></div>

        <!-- properties palette -->
        <aside class="props d-flex flex-column flex-shrink-0 overflow-hidden">
            <div class="dock-head">Properties</div>
            <div class="type-box">
                <div class="type-img d-flex align-items-center justify-content-center">
                    <svg width="28" height="34" viewBox="0 0 28 34"><path fill-rule="evenodd" d="M3 1h13c13 0 12 15 3 18l7 13-9-4-5-9v9l-9 3zM11 7v7c9 2 9-8 0-7z" fill="#8e8e8e"/><path d="M3 1l5 4v23l-5 3z" fill="#b5b5b5"/></svg>
                </div>
            </div>
            <div class="type-row d-flex align-items-center flex-shrink-0">
                <div class="position-relative flex-shrink-0">
                    <select class="type-select" aria-label="Type"><option>Family: Mass</option></select>
                    <svg class="position-absolute top-50 end-0 translate-middle-y me-1" width="8" height="8"><use href="#down"/></svg>
                </div>
                <button class="dim d-flex align-items-center ms-1 text-nowrap"><svg class="ic"><use href="#tile4"/></svg>Edit Type</button>
            </div>
            <table class="grid-table">
                <colgroup><col class="name-col"><col></colgroup>
                <tr class="group"><th colspan="2">Constraints</th></tr>
                <tr><th class="dim"><label for="host">Host</label></th><td><input id="host" disabled></td></tr>
                <tr class="group"><th colspan="2">Identity Data</th></tr>
                <tr><th><label for="omniNum">OmniClass Num...</label></th><td class="current"><input id="omniNum"></td></tr>
                <tr><th class="dim"><label for="omniTitle">OmniClass Title</label></th><td><input id="omniTitle" disabled></td></tr>
            </table>
            <div class="props-foot d-flex align-items-center mt-auto">
                <a class="text-nowrap flex-shrink-0" href="#">Properties help</a>
                <button class="apply">Apply</button>
            </div>
        </aside>
    </main>

    <footer class="statusbar d-flex align-items-center justify-content-end flex-shrink-0">
        <div class="status-tools d-flex align-items-center" id="statusTools"></div>
    </footer>

    <script src="https://cdn.jsdelivr.net/npm/bootstrap@5.3.0/dist/js/bootstrap.bundle.min.js"></script>
    <script>
        const icon = (name, cls = 'ic-xs') => `<svg class="${cls}"><use href="#${name}"/></svg>`;
        const tool = (name, cls) => `<button aria-label="${name}">${icon(name, cls)}</button>`;

        // "+" after a name adds its drop-down arrow, "|" is a separator
        const quick = ['open', 'save', 'sync+', 'undo+', 'redo+', 'print', '|', 'meas+', 'dim', 'tag', 'text', '|',
            'house+', 'section', 'thin', '|', 'closeh', 'switch+', 'more'];
        document.getElementById('quick').innerHTML = quick.map(q => {
            if (q === '|') return '<span class="vsep"></span>';
            if (q === 'text') return '<button class="tool text-tool">A</button>';
            if (q === 'more') return '<button class="caret" aria-label="Customize"></button>';
            const name = q.replace('+', '');
            return `<div class="d-flex align-items-center"><button class="tool ${name === 'thin' ? 'active' : ''}" aria-label="${name}">${icon(name)}</button>${q.endsWith('+') ? '<span class="caret"></span>' : ''}</div>`;
        }).join('');

        const tabs = ['Create', 'Insert', 'View', 'Manage', 'Add-Ins', 'Enscape™', 'Lumion®', 'Twinmotion', 'Modify'];
        document.getElementById('tabs').innerHTML = '<button class="file-tab" aria-label="File"></button>'
            + tabs.map(t => `<button class="tab ${t === 'Modify' ? 'active' : ''}">${t}</button>`).join('')
            + '<button class="d-flex align-items-center ms-3" aria-label="Ribbon display"><svg width="11" height="8" viewBox="0 0 11 8"><rect x=".5" y="1.500" width="10" height="6" rx="2" fill="#eee" stroke="#445"/><path d="M4 3h3v3H4z" fill="#445"/></svg><span class="caret"></span></button>';

        document.getElementById('gallery').innerHTML = Array.from({ length: 15 }, (_, i) => tool('g' + (i + 1))).join('');
        document.getElementById('modGrid').innerHTML = ['m1', 'm2', 'm3', 'm4', 'm5', 'm6', 'm7', 'm8', 'm9', 'm10', 'm11', 'm12', 'm13', 'm14', 'redx'].map(n => tool(n)).join('');
        document.getElementById('viewTools').innerHTML = ['detail', 'style3d', 'sunx', 'sunb', 'house', 'shade', 'crop', 'screen'].map(n => tool(n)).join('');
        document.getElementById('statusTools').innerHTML = ['s1', 's2', 's3', 's4', 's5', 's6'].map(n => tool(n, 'ic')).join('')
            + `<span class="d-flex align-items-center">${icon('s7')}:0</span>`;

        // [level, label, closed]
        const nodes = [
            [0, 'Views (Discipline)'],
            [1, 'Architectural'], [2, 'HVAC'], [3, 'Floor Plans'], [4, '1 - Mech'], [3, '3D Views', true],
            [1, 'Electrical'], [2, 'Lighting'], [3, 'Floor Plans'], [4, '1 - Lighting'], [4, '2 - Lighting'],
            [3, 'Ceiling Plans'], [4, '1 - Ceiling Elec'], [4, '2 - Ceiling Elec'],
            [2, 'Power'], [3, 'Floor Plans'], [4, '1 - Power'], [4, '2 - Power'], [3, '3D Views'], [4, '3D Elec'],
            [3, 'Elevations (Building Elevation)'], [4, 'East - Elec'], [4, 'North - Elec'], [4, 'South - Elec'], [4, 'West - Elec'],
            [1, 'Mechanical'], [2, 'HVAC'], [3, 'Floor Plans'], [4, '2 - Mech'],
            [3, 'Ceiling Plans'], [4, '1 - Ceiling Mech'], [4, '2 - Ceiling Mech'],
            [3, 'Elevations (Building Elevation)'], [4, 'East - Mech'], [4, 'North - Mech'], [4, 'South - Mech'], [4, 'West - Mech'],
            [1, 'Plumbing'], [2, 'Plumbing'], [3, 'Floor Plans'], [4, '1 - Plumbing'], [4, '2 - Plumbing'],
            [3, '3D Views'], [4, '3D Plumbing'], [3, 'Elevations (Building Elevation)'], [4, 'East - Plumbing']
        ];

        function continues(index, level) {
            const next = nodes.slice(index + 1).find(n => n[0] <= level);
            return Boolean(next) && next[0] === level;
        }

        document.getElementById('tree').innerHTML = nodes.map(([level, label, closed], i) => {
            if (level === 0) return `<div class="tree-row"><span class="tree-root">${label}</span></div>`;
            let cells = '';
            for (let l = 2; l <= level; l++) {
                const more = continues(i, l);
                const line = more ? 'line-full' : (l === level ? 'line-half' : '');
                const box = l === level && level < 4
                    ? `<button class="node-box ${closed ? 'node-plus' : ''}" aria-label="Toggle ${label}"></button>` : '';
                cells += `<span class="guide ${line}">${box}</span>`;
            }
            return `<div class="tree-row">${cells}<span class="stub ${level === 4 ? 'stub-leaf' : ''}"></span><span>${label}</span></div>`;
        }).join('');
    </script>
</body>
</html>
